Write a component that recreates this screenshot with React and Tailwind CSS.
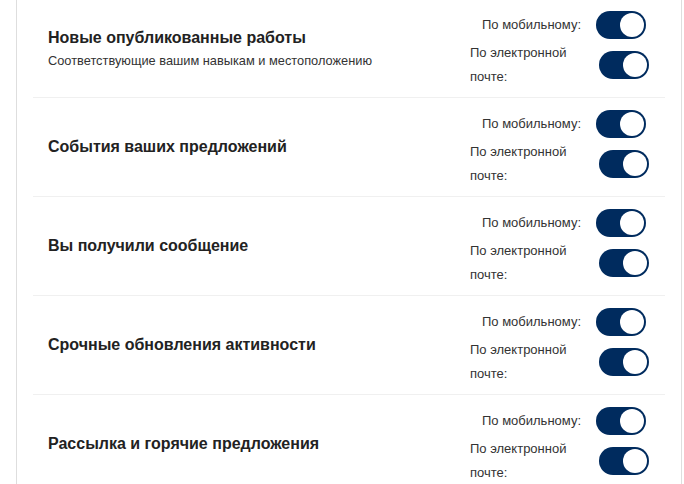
import React from 'react';

const rows = [
  { title: 'Новые опубликованные работы', sub: 'Соответствующие вашим навыкам и местоположению' },
  { title: 'События ваших предложений' },
  { title: 'Вы получили сообщение' },
  { title: 'Срочные обновления активности' },
  { title: 'Рассылка и горячие предложения' },
];

const Toggle = () => (
  <div className="relative w-[50px] h-[28px] rounded-full bg-[#002b5e] shrink-0">
    <div className="absolute right-[2px] top-[2px] w-[24px] h-[24px] rounded-full bg-white" />
  </div>
);

const App = () => {
  return (
    <div className="w-[684px] h-[484px] overflow-hidden bg-white" style={{ fontFamily: '"Liberation Sans", Arial, sans-serif' }}>
      <div className="ml-[16px] w-[666px] h-[500px] border-l border-r border-[#dedede] px-[16px] -mt-[1px]">
        {rows.map((r, i) => (
          <div key={i} className="flex justify-between h-[99px] border-b border-[#f0f0f0]">
            <div className="self-center pl-[15px]">
              <p className="text-[16px] font-bold text-[#222]">{r.title}</p>
              {r.sub && <p className="text-[12.8px] text-[#333] mt-[1px]">{r.sub}</p>}
            </div>
            <div className="pt-[12px] pr-[16px] w-[200px] flex flex-col items-end">
              <div className="flex items-center mr-[3px]">
                <span className="text-[13px] text-[#333] mr-[15px]">По мобильному:</span>
                <Toggle />
              </div>
              <div className="flex items-center mt-[2px]">
                <span className="text-[13px] text-[#333] w-[129px] leading-[24px]">По электронной почте:</span>
                <Toggle />
              </div>
            </div>
          </div>
        ))}
      </div>
    </div>
  );
};

export default App;
